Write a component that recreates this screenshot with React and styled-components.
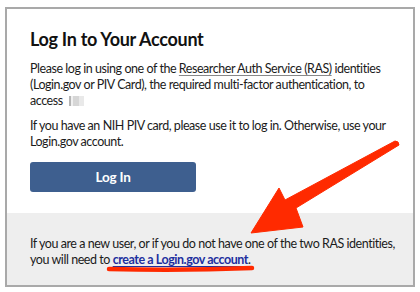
import React from "react";
import styled, { createGlobalStyle } from "styled-components";

const Global = createGlobalStyle`
  html, body { margin: 0; padding: 0; background: #ffffff; }
  body { font-family: "Lato", "Open Sans", sans-serif; }
`;

const Stage = styled.div`
  position: relative;
  width: 420px;
  height: 292px;
  padding: 7px 0 0 5px;
  box-sizing: border-box;
`;

const Card = styled.div`
  width: 410px;
  height: 280px;
  box-sizing: border-box;
  border: 2px solid #a9a9a9;
  display: flex;
  flex-direction: column;
  background: #fff;
`;

const Main = styled.section`
  padding: 19px 14px 0 23px;
  height: 204px;
  box-sizing: border-box;
  color: #1b1b1b;
`;

const Title = styled.h1`
  margin: 0 0 11px 0;
  font-size: 18px;
  line-height: 22px;
  letter-spacing: -0.3px;
  font-weight: 700;
  color: #111;
`;

const Para = styled.p`
  margin: 0 0 9px 0;
  font-size: 12.5px;
  line-height: 16px;
  letter-spacing: -0.45px;
`;

const Abbr = styled.span`
  text-decoration: underline;
  text-decoration-color: #888;
  text-underline-offset: 2px;
`;

const Blur = styled.span`
  display: inline-block;
  width: 15px;
  height: 10px;
  margin-left: 6px;
  vertical-align: -1px;
  background: linear-gradient(90deg, #b5b5b5 0 2px, #f0f0f0 2px 4px, #d6d6d6 4px 10px, #e9e9e9 10px);
`;

const Button = styled.button`
  display: flex;
  align-items: center;
  justify-content: center;
  margin-top: 12px;
  width: 166px;
  height: 30px;
  border: none;
  border-radius: 3px;
  background: #3e5f8f;
  color: #fff;
  font-family: inherit;
  font-weight: 700;
  font-size: 13.5px;
  letter-spacing: -0.2px;
`;

const Footer = styled.section`
  flex: 1;
  background: #eeeeee;
  padding: 23px 14px 0 23px;
  color: #1b1b1b;
`;

const Link = styled.a`
  color: #1d2f9e;
  font-weight: 700;
  text-decoration: underline;
  text-underline-offset: 2px;
`;

const Overlay = styled.svg`
  position: absolute;
  left: 0;
  top: 0;
  pointer-events: none;
`;

export default function App() {
  return (
    <>
      <Global />
      <Stage>
        <Card>
          <Main>
            <Title>Log In to Your Account</Title>
            <Para>
              Please log in using one of the <Abbr>Researcher Auth Service (RAS)</Abbr> identities
              <br />
              (Login.gov or PIV Card), the required multi-factor authentication, to
              <br />
              access<Blur />
            </Para>
            <Para>
              If you have an NIH PIV card, please use it to log in. Otherwise, use your
              <br />
              Login.gov account.
            </Para>
            <Button>Log In</Button>
          </Main>
          <Footer>
            <Para>
              If you are a new user, or if you do not have one of the two RAS identities,
              <br />
              you will need to <Link href="#">create a Login.gov account</Link>.
            </Para>
          </Footer>
        </Card>
        <Overlay width="420" height="292" viewBox="0 0 420 292">
          <path
            d="M251 233 L279 188 L285 200 L395 141 Q399 141 399 145 L296 208 L303 227 Z"
            fill="#ff2a00"
            stroke="#ff2a00"
            strokeWidth="1"
            strokeLinejoin="round"
          />
          <path d="M109 269 Q180 271 252 268" stroke="#ff2a00" strokeWidth="4.5" strokeLinecap="round" fill="none" />
        </Overlay>
      </Stage>
    </>
  );
}
